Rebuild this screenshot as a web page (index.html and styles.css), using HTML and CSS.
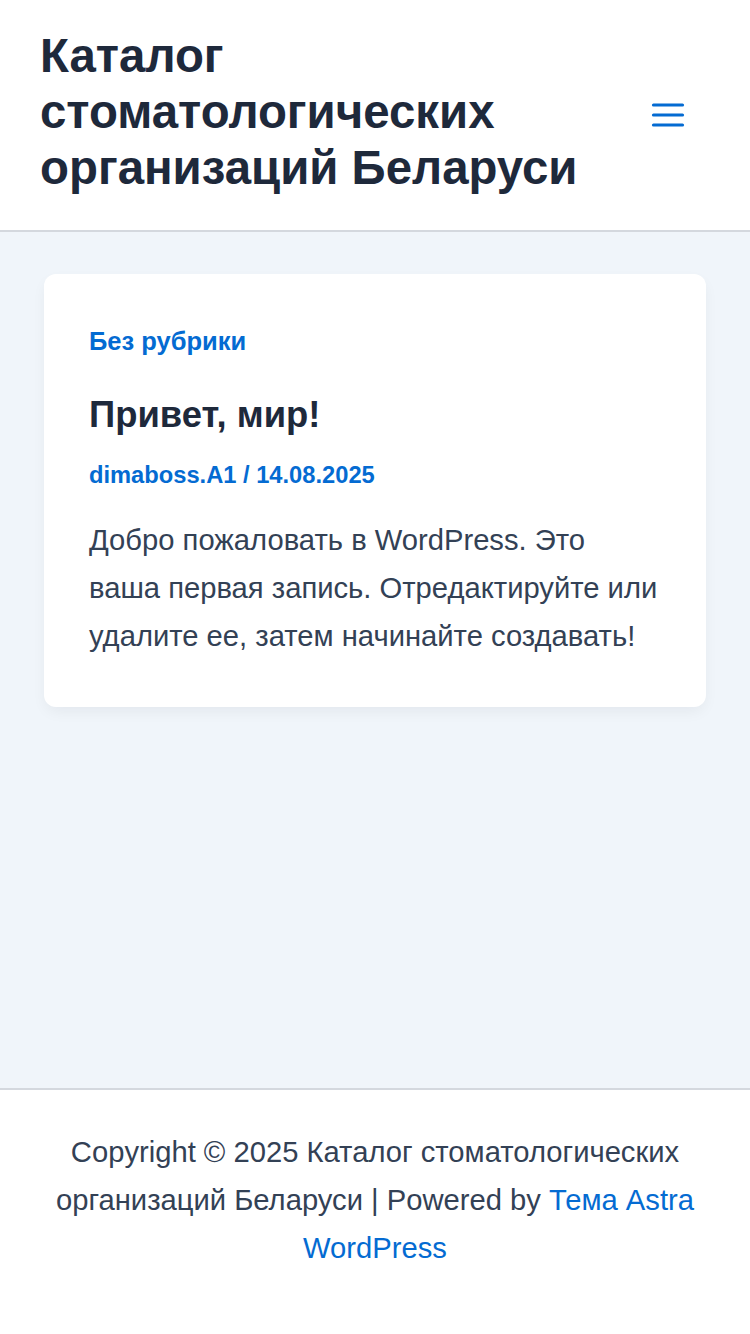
FILE: index.html
```html
<!DOCTYPE html>
<html lang="ru">
<head>
<meta charset="utf-8">
<title>Каталог стоматологических организаций Беларуси</title>
<link rel="stylesheet" href="styles.css">
</head>
<body>
<header class="site-header">
  <h1 class="site-title">Каталог стоматологических организаций Беларуси</h1>
  <button class="menu-toggle" aria-label="Меню">
    <svg width="36" height="30" viewBox="0 0 36 30" aria-hidden="true">
      <g stroke="#046bd2" stroke-width="3.2" stroke-linecap="round">
        <line x1="3.5" y1="5" x2="32.5" y2="5"/>
        <line x1="3.5" y1="15" x2="32.5" y2="15"/>
        <line x1="3.5" y1="25" x2="32.5" y2="25"/>
      </g>
    </svg>
  </button>
</header>
<main class="site-main">
  <article class="post-card">
    <a class="post-category" href="#">Без рубрики</a>
    <h2 class="post-title">Привет, мир!</h2>
    <div class="post-meta"><a href="#">dimaboss.A1</a> / <span>14.08.2025</span></div>
    <p class="post-excerpt">Добро пожаловать в WordPress. Это ваша первая запись. Отредактируйте или удалите ее, затем начинайте создавать!</p>
  </article>
</main>
<footer class="site-footer">
  <p class="copyright">Copyright © 2025 Каталог стоматологических организаций Беларуси | Powered by <a href="#">Тема Astra WordPress</a></p>
</footer>
</body>
</html>
```
FILE: styles.css
```css
* { box-sizing: border-box; }
html, body { margin: 0; padding: 0; }
body {
  font-family: "Liberation Sans", Arial, sans-serif;
  color: #334155;
  background: #f0f5fa;
  min-height: 100vh;
  display: flex;
  flex-direction: column;
}
a { text-decoration: none; color: #046bd2; }

.site-header {
  background: #ffffff;
  border-bottom: 2px solid #d4d8de;
  height: 232px;
  padding: 0 40px;
  display: flex;
  align-items: center;
  justify-content: space-between;
}
.site-title {
  margin: 0;
  margin-top: -6px;
  max-width: 560px;
  font-size: 47.4px;
  line-height: 56px;
  font-weight: 700;
  color: #1e293b;
}
.menu-toggle {
  background: none;
  border: 0;
  padding: 0;
  margin: 0 24px 0 0;
  width: 36px;
  height: 30px;
  display: flex;
}

.site-main {
  flex: 1;
  padding: 42px 44px;
}
.post-card {
  background: #ffffff;
  border-radius: 12px;
  box-shadow: 0 6px 15px -2px rgba(16, 24, 40, 0.06);
  padding: 45px 45px 47px 45px;
}
.post-category {
  display: block;
  font-size: 25.5px;
  line-height: 45.6px;
  font-weight: 700;
}
.post-title {
  margin: 28px 0 0;
  font-size: 36.4px;
  line-height: 43.2px;
  font-weight: 700;
  color: #1e293b;
}
.post-meta {
  margin-top: 23px;
  font-size: 23.7px;
  line-height: 33px;
  font-weight: 700;
  color: #046bd2;
}
.post-excerpt {
  margin: 24.7px 0 0;
  font-size: 29.2px;
  line-height: 48px;
}

.site-footer {
  background: #ffffff;
  border-top: 2px solid #d4d8de;
  height: 246px;
  padding: 38px 24px 0;
  text-align: center;
}
.copyright {
  margin: 0;
  font-size: 29.2px;
  line-height: 48px;
}
```
